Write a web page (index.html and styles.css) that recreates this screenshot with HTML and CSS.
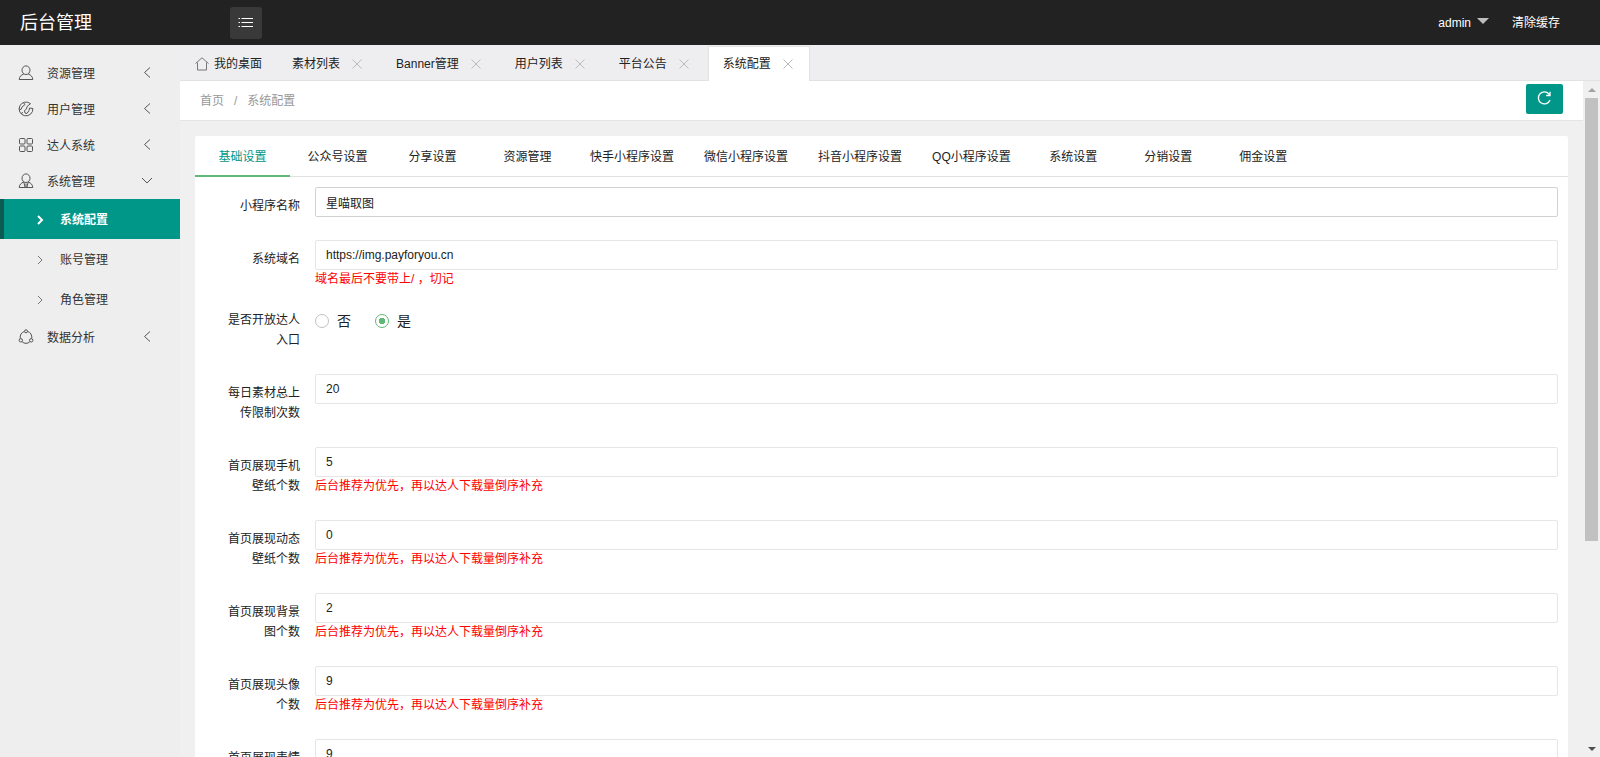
FILE: index.html
```html
<!DOCTYPE html>
<html lang="zh-CN">
<head>
<meta charset="utf-8">
<title>后台管理</title>
<link rel="stylesheet" href="styles.css">
</head>
<body>
<svg class="defs" aria-hidden="true">
  <symbol id="left" viewBox="0 0 12 12"><path d="M9 .5 3.500 5.500l5.500 5"/></symbol>
  <symbol id="down" viewBox="0 0 12 12"><path d="M1 3l5 5 5-5"/></symbol>
  <symbol id="right" viewBox="0 0 12 12"><path d="M4 2l4 4-4 4"/></symbol>
  <symbol id="close" viewBox="0 0 10 10"><path d="M.5.500l9 9M9.500.500l-9 9"/></symbol>
</svg>
<header class="top">
  <a class="logo" href="#">后台管理</a>
  <button class="toggle" type="button" aria-label="菜单">
    <svg width="16" height="12" viewBox="0 0 16 12"><path d="M3.500 1.500H15M3.500 5.500H15M3.500 9.500H15M.5 1.500h1.500M.5 5.500h1.500M.5 9.500h1.500"/></svg>
  </button>
  <nav class="account">
    <a href="#">admin<span class="caret"></span></a>
    <a href="#">清除缓存</a>
  </nav>
</header>
<div class="shell">
  <nav class="side">
    <a class="item" href="#">
      <svg class="ico" viewBox="0 0 16 16"><ellipse cx="8" cy="5.200" rx="4" ry="4.300"/><path d="M5.800 9C3 10 1.500 11.500 1.200 14.500h13.600C14.500 11.500 13 10 10.200 9"/></svg>
      <span>资源管理</span><svg class="arrow"><use href="#left"/></svg></a>
    <a class="item" href="#">
      <svg class="ico" viewBox="0 0 16 16"><path d="M12.500 2.700A6.900 6.900 0 1 0 14.900 7.500"/><path d="M5.500 1.600 7 3.500 4 6 3 8.500 1.200 8M12.500 2.700 9 5.500 8.500 8 6.500 9.500 7 12l2 .5M11.500 7l3.400.5M11.500 7 11 9.500 9 12.500M3 12.500l2-1"/></svg>
      <span>用户管理</span><svg class="arrow"><use href="#left"/></svg></a>
    <a class="item" href="#">
      <svg class="ico" viewBox="0 0 16 16"><rect x="1.500" y="1.500" width="5.500" height="5.500" rx="1"/><rect x="9" y="1.500" width="5.500" height="5.500" rx="1"/><rect x="1.500" y="9" width="5.500" height="5.500" rx="1"/><rect x="9" y="9" width="5.500" height="5.500" rx="1"/></svg>
      <span>达人系统</span><svg class="arrow"><use href="#left"/></svg></a>
    <a class="item" href="#">
      <svg class="ico" viewBox="0 0 16 16"><ellipse cx="8" cy="5.200" rx="4" ry="4.300"/><path d="M5.800 9C3 10 1.500 11.500 1.200 14.500h13.600C14.500 11.500 13 10 10.200 9M5.800 9 7 14M10.200 9 9 14M8 10.500v3.500"/></svg>
      <span>系统管理</span><svg class="arrow"><use href="#down"/></svg></a>
    <div class="sub">
      <a class="on" href="#"><svg class="chev"><use href="#right"/></svg>系统配置</a>
      <a href="#"><svg class="chev"><use href="#right"/></svg>账号管理</a>
      <a href="#"><svg class="chev"><use href="#right"/></svg>角色管理</a>
    </div>
    <a class="item" href="#">
      <svg class="ico" viewBox="0 0 16 16"><path d="M6.300 2.500C3.500 3.300 1.800 6 2.200 9.500M9.700 2.500c2.800.8 4.500 3.500 4.100 7M4.200 12.800c2.200 2 5.400 2 7.600 0"/><circle cx="8" cy="2.300" r="1.500"/><circle cx="2.800" cy="11.300" r="1.700"/><circle cx="13.200" cy="11.300" r="1.700"/></svg>
      <span>数据分析</span><svg class="arrow"><use href="#left"/></svg></a>
  </nav>
  <div class="main">
    <nav class="tabs">
      <a class="home" href="#"><svg class="house" viewBox="0 0 14 14"><path d="M.5 6.500 7 .8l6.500 5.700M2.500 5.500v7.500h9V5.500"/></svg>我的桌面</a>
      <a href="#">素材列表<svg class="close"><use href="#close"/></svg></a>
      <a href="#">Banner管理<svg class="close"><use href="#close"/></svg></a>
      <a href="#">用户列表<svg class="close"><use href="#close"/></svg></a>
      <a href="#">平台公告<svg class="close"><use href="#close"/></svg></a>
      <a class="current" href="#">系统配置<svg class="close"><use href="#close"/></svg></a>
    </nav>
    <div class="frame">
      <div class="page">
        <div class="crumbs">
          <a href="#">首页</a><span class="slash">/</span><a href="#">系统配置</a>
          <button class="refresh" type="button" aria-label="刷新">
            <svg width="15" height="15" viewBox="0 0 15 15"><path d="M12.300 3.500A6 6 0 1 0 13 9M13 .8v3.700H9.200"/></svg>
          </button>
        </div>
        <section class="card">
          <nav class="heads">
            <a class="active" href="#">基础设置</a><a href="#">公众号设置</a><a href="#">分享设置</a><a href="#">资源管理</a><a href="#">快手小程序设置</a><a href="#">微信小程序设置</a><a href="#">抖音小程序设置</a><a href="#">QQ小程序设置</a><a href="#">系统设置</a><a href="#">分销设置</a><a href="#">佣金设置</a>
          </nav>
          <form class="form">
            <div class="row"><label for="f1">小程序名称</label><div class="field"><input class="text hover" id="f1" type="text" value="星喵取图"></div></div>
            <div class="row"><label for="f2">系统域名</label><div class="field"><input class="text" id="f2" type="text" value="https://img.payforyou.cn"><p class="hint">域名最后不要带上/ ，切记</p></div></div>
            <div class="row" role="radiogroup" aria-labelledby="f3"><span class="label" id="f3">是否开放达人入口</span><div class="field radios"><label class="choice"><input type="radio" name="open">否</label><label class="choice"><input type="radio" name="open" checked>是</label></div></div>
            <div class="row"><label for="f4">每日素材总上传限制次数</label><div class="field"><input class="text" id="f4" type="text" value="20"></div></div>
            <div class="row"><label for="f5">首页展现手机壁纸个数</label><div class="field"><input class="text" id="f5" type="text" value="5"><p class="hint">后台推荐为优先，再以达人下载量倒序补充</p></div></div>
            <div class="row"><label for="f6">首页展现动态壁纸个数</label><div class="field"><input class="text" id="f6" type="text" value="0"><p class="hint">后台推荐为优先，再以达人下载量倒序补充</p></div></div>
            <div class="row"><label for="f7">首页展现背景图个数</label><div class="field"><input class="text" id="f7" type="text" value="2"><p class="hint">后台推荐为优先，再以达人下载量倒序补充</p></div></div>
            <div class="row"><label for="f8">首页展现头像个数</label><div class="field"><input class="text" id="f8" type="text" value="9"><p class="hint">后台推荐为优先，再以达人下载量倒序补充</p></div></div>
            <div class="row"><label for="f9">首页展现表情个数</label><div class="field"><input class="text" id="f9" type="text" value="9"></div></div>
          </form>
        </section>
      </div>
      <div class="scrollbar" aria-hidden="true"><i class="up"></i><div class="track"><div class="thumb"></div></div><i class="dn"></i></div>
    </div>
  </div>
</div>
</body>
</html>
```
FILE: styles.css
```css
* { box-sizing: border-box; }
body {
  margin: 0;
  height: 100vh;
  display: flex;
  flex-direction: column;
  overflow: hidden;
  background: #f0f0f0;
  color: #222;
  font: 12px/20px "Liberation Sans", "Noto Sans CJK SC", sans-serif;
}
a { color: inherit; text-decoration: none; }
svg { fill: none; stroke: currentColor; flex: none; }
.defs { position: absolute; width: 0; height: 0; }

.top {
  flex: none;
  height: 45px;
  display: flex;
  align-items: center;
  background: #222;
  color: #fff;
}
.logo { width: 210px; margin-left: 20px; font-size: 18px; line-height: 44px; }
.toggle {
  width: 32px;
  height: 32px;
  padding: 0;
  display: flex;
  align-items: center;
  justify-content: center;
  border: 0;
  border-radius: 3px;
  background: #393939;
  color: #fff;
}
.account { margin-left: auto; display: flex; gap: 23px; padding-right: 40px; line-height: 44px; }
.account a { display: flex; align-items: center; }
.caret { margin-left: 6px; margin-bottom: 4px; border: 6px solid transparent; border-top-color: #bdbdbd; border-bottom: 0; }

.shell { flex: 1; min-height: 0; display: flex; }
.side { flex: none; width: 180px; padding-top: 10px; background: #eee; color: #333; }
.item { height: 36px; display: flex; align-items: center; padding: 0 27px 0 18px; }
.item span { padding-top: 2px; }
.ico { width: 16px; height: 16px; margin-right: 13px; color: #555; }
.arrow { width: 12px; height: 12px; margin-left: auto; color: #555; }
.sub a { height: 40px; display: flex; align-items: center; padding: 2px 0 0 30px; border-left: 4px solid transparent; }
.sub .on { background: #009688; border-left-color: #0b5b52; color: #fff; font-weight: bold; }
.chev { width: 12px; height: 12px; margin-right: 14px; color: #777; }
.on .chev { color: #fff; stroke-width: 2; }

.main { flex: 1; min-width: 0; display: flex; flex-direction: column; }
.tabs {
  flex: none;
  height: 36px;
  display: flex;
  border-bottom: 1px solid #e2e2e2;
  background: #eeeef0;
}
.tabs a {
  height: 34px;
  margin-top: 1px;
  padding: 0 18px 0 14px;
  display: flex;
  align-items: center;
  border: 1px solid transparent;
  border-bottom: 0;
}
.tabs .home { padding-right: 14px; }
.tabs .current { height: 36px; padding-right: 16px; padding-bottom: 2px; border-color: #e2e2e2; background: #fff; }
.house { width: 14px; height: 14px; margin-right: 5px; color: #777; }
.close { width: 10px; height: 10px; margin-left: 12px; color: #bbb; }

.frame { flex: 1; min-height: 0; display: flex; }
.page { flex: 1; min-width: 0; overflow: hidden; }
.crumbs {
  height: 40px;
  display: flex;
  align-items: center;
  padding: 0 20px;
  border-bottom: 1px solid #e5e5e5;
  background: #fff;
  color: #999;
}
.slash { margin: 0 10px; }
.refresh {
  width: 37px;
  height: 30px;
  margin: 0 0 4px auto;
  padding: 0;
  display: flex;
  align-items: center;
  justify-content: center;
  border: 0;
  border-radius: 2px;
  background: #009688;
  color: #fff;
}
.refresh svg { stroke-width: 1.3; }

.card { margin: 15px; border-radius: 2px; background: #fff; }
.heads { height: 41px; display: flex; border-bottom: 1px solid #e2e2e2; }
.heads a { min-width: 95px; height: 41px; padding: 1px 15px 0; line-height: 40px; text-align: center; }
.heads .active { color: #009688; border-bottom: 2px solid #5fb878; }

.form { padding: 10px; display: flex; flex-direction: column; gap: 15px; }
.row { display: flex; align-items: flex-start; }
.row > label, .label { flex: none; width: 110px; padding: 9px 15px; text-align: right; }
.field { flex: 1; min-width: 0; }
.text {
  display: block;
  width: 100%;
  height: 30px;
  padding: 0 10px;
  border: 1px solid #e6e6e6;
  border-radius: 2px;
  background: #fff;
  color: #222;
  font: inherit;
}
.text.hover { border-color: #d2d2d2; }
.hint { height: 16px; margin: 0; color: #f00; line-height: 19px; }
.radios { display: flex; gap: 24px; padding-top: 10px; font-size: 14px; }
.choice { display: flex; align-items: center; gap: 8px; }
.choice input {
  appearance: none;
  width: 14px;
  height: 14px;
  margin: 0;
  border: 1px solid #c2c2c2;
  border-radius: 50%;
}
.choice input:checked { border-color: #5fb878; background: radial-gradient(circle, #5fb878 3px, transparent 3px); }

.scrollbar { flex: none; width: 17px; display: flex; flex-direction: column; align-items: center; background: #f0f0f0; }
.track { flex: 1; width: 13px; }
.thumb { height: 69%; background: #c1c1c1; }
.up, .dn { width: 0; height: 0; margin: 7px 0 6px; border: 4px solid transparent; }
.up { border-top: 0; border-bottom-color: #a3a3a3; }
.dn { border-bottom: 0; border-top-color: #505050; }
```
